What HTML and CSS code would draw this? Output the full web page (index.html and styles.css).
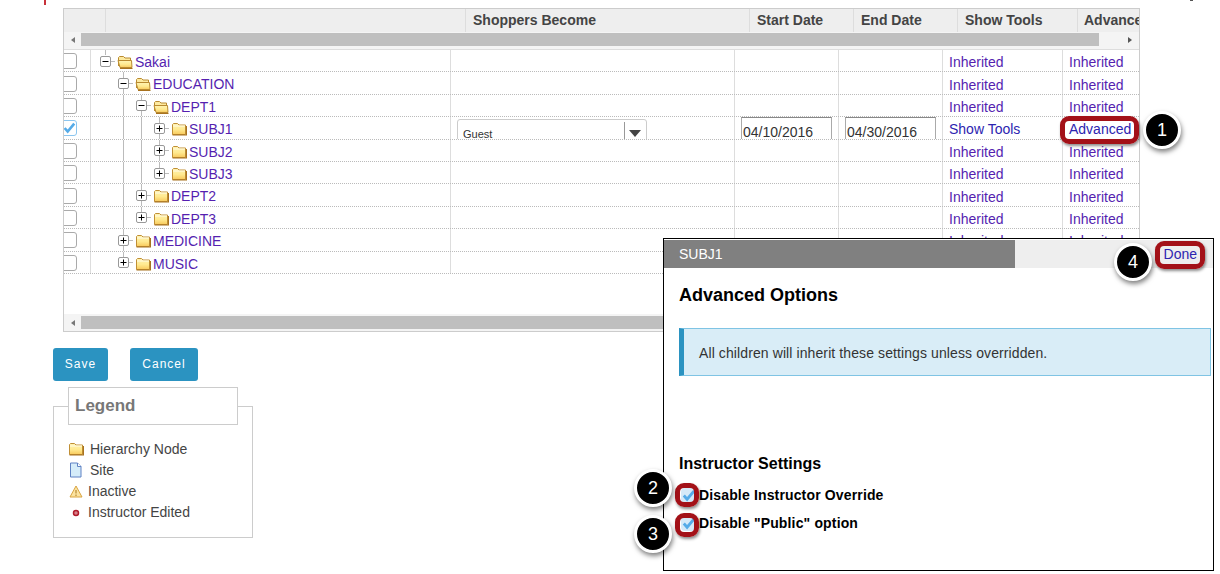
FILE: index.html
```html
<!DOCTYPE html>
<html lang="en">
<head>
    <meta charset="UTF-8">
    <title>Shopping Period Tool</title>
    <link rel="stylesheet" href="styles.css">
</head>
<body>
    <svg class="defs" width="0" height="0">
        <defs>
            <linearGradient id="fill" x1="0" y1="0" x2="0" y2="1">
                <stop offset="0" stop-color="#fff4b4"/>
                <stop offset=".55" stop-color="#ffe98f"/>
                <stop offset="1" stop-color="#f8c95c"/>
            </linearGradient>
        </defs>
        <symbol id="folder" viewBox="0 0 16 14">
            <path d="M1.500 12.500V2.500L2.500 1.500H6.500L8 3H14.500V12.500Z" fill="url(#fill)" stroke="#c08f35"/>
            <path d="M2 4H14" stroke="#fffbe6"/>
            <path d="M1.500 13H15.500V4" fill="none" stroke="#a8721f" stroke-width="1.200"/>
        </symbol>
        <symbol id="folder-open" viewBox="0 0 16 14">
            <path d="M1.500 11V2.500L2.500 1.500H6.500L8 3H13.500V5" fill="#fdeaa0" stroke="#b98a30"/>
            <path d="M3 12.500L1 5.500H14.500L15 12.500Z" fill="url(#fill)" stroke="#b98a30"/>
            <path d="M3 13.500H15.500" fill="none" stroke="#a8721f"/>
        </symbol>
        <symbol id="plus" viewBox="0 0 16 11">
            <path d="M11 5.500H15" stroke="#bbb" fill="none"/>
            <rect x=".5" y=".5" width="10" height="10" rx="1.500" fill="#fff" stroke="#999"/>
            <path d="M2.500 5.500H8.500M5.500 2.500V8.500" stroke="#000" fill="none"/>
        </symbol>
        <symbol id="minus" viewBox="0 0 16 11">
            <path d="M11 5.500H15" stroke="#bbb" fill="none"/>
            <rect x=".5" y=".5" width="10" height="10" rx="1.500" fill="#fff" stroke="#999"/>
            <path d="M2.500 5.500H8.500" stroke="#000" fill="none"/>
        </symbol>
        <symbol id="check" viewBox="0 0 16 16">
            <path d="M3 8L6.500 12L14 3" fill="none" stroke="#55abe8" stroke-width="3"/>
        </symbol>
    </svg>

    <!-- bits of the previous step's callouts, cut off at the top of the picture -->
    <span class="cut cut-red"></span>
    <span class="cut cut-dark"></span>

    <div class="sheet">
        <div class="head">
            <div></div>
            <div></div>
            <div>Shoppers Become</div>
            <div>Start Date</div>
            <div>End Date</div>
            <div>Show Tools</div>
            <div>Advanced</div>
        </div>
        <div class="scroll">
            <span class="arrow left"></span>
            <span class="thumb"></span>
            <span class="arrow right"></span>
        </div>

        <div class="rows">
            <div class="row">
                <div class="cell"><span class="box"></span></div>
                <div class="cell tree">
                    <span class="slot stub"><svg class="exp"><use href="#minus"/></svg></span>
                    <svg class="fold"><use href="#folder-open"/></svg><a>Sakai</a>
                </div>
                <div class="cell"></div><div class="cell"></div><div class="cell"></div>
                <div class="cell"><a>Inherited</a></div>
                <div class="cell"><a>Inherited</a></div>
            </div>
            <div class="row">
                <div class="cell"><span class="box"></span></div>
                <div class="cell tree">
                    <span class="slot"></span>
                    <span class="slot line"><svg class="exp"><use href="#minus"/></svg></span>
                    <svg class="fold"><use href="#folder-open"/></svg><a>EDUCATION</a>
                </div>
                <div class="cell"></div><div class="cell"></div><div class="cell"></div>
                <div class="cell"><a>Inherited</a></div>
                <div class="cell"><a>Inherited</a></div>
            </div>
            <div class="row">
                <div class="cell"><span class="box"></span></div>
                <div class="cell tree">
                    <span class="slot"></span><span class="slot line"></span>
                    <span class="slot line"><svg class="exp"><use href="#minus"/></svg></span>
                    <svg class="fold"><use href="#folder-open"/></svg><a>DEPT1</a>
                </div>
                <div class="cell"></div><div class="cell"></div><div class="cell"></div>
                <div class="cell"><a>Inherited</a></div>
                <div class="cell"><a>Inherited</a></div>
            </div>
            <div class="row">
                <div class="cell"><span class="box checked"><svg><use href="#check"/></svg></span></div>
                <div class="cell tree">
                    <span class="slot"></span><span class="slot line"></span><span class="slot line"></span>
                    <span class="slot line"><svg class="exp"><use href="#plus"/></svg></span>
                    <svg class="fold"><use href="#folder"/></svg><a>SUBJ1</a>
                </div>
                <div class="cell"><div class="pick">Guest<span class="caret"></span></div></div>
                <div class="cell"><div class="date">04/10/2016</div></div>
                <div class="cell"><div class="date">04/30/2016</div></div>
                <div class="cell"><a class="on">Show Tools</a></div>
                <div class="cell"><a class="on">Advanced</a></div>
            </div>
            <div class="row">
                <div class="cell"><span class="box"></span></div>
                <div class="cell tree">
                    <span class="slot"></span><span class="slot line"></span><span class="slot line"></span>
                    <span class="slot line"><svg class="exp"><use href="#plus"/></svg></span>
                    <svg class="fold"><use href="#folder"/></svg><a>SUBJ2</a>
                </div>
                <div class="cell"></div><div class="cell"></div><div class="cell"></div>
                <div class="cell"><a>Inherited</a></div>
                <div class="cell"><a>Inherited</a></div>
            </div>
            <div class="row">
                <div class="cell"><span class="box"></span></div>
                <div class="cell tree">
                    <span class="slot"></span><span class="slot line"></span><span class="slot line"></span>
                    <span class="slot half"><svg class="exp"><use href="#plus"/></svg></span>
                    <svg class="fold"><use href="#folder"/></svg><a>SUBJ3</a>
                </div>
                <div class="cell"></div><div class="cell"></div><div class="cell"></div>
                <div class="cell"><a>Inherited</a></div>
                <div class="cell"><a>Inherited</a></div>
            </div>
            <div class="row">
                <div class="cell"><span class="box"></span></div>
                <div class="cell tree">
                    <span class="slot"></span><span class="slot line"></span>
                    <span class="slot line"><svg class="exp"><use href="#plus"/></svg></span>
                    <svg class="fold"><use href="#folder"/></svg><a>DEPT2</a>
                </div>
                <div class="cell"></div><div class="cell"></div><div class="cell"></div>
                <div class="cell"><a>Inherited</a></div>
                <div class="cell"><a>Inherited</a></div>
            </div>
            <div class="row">
                <div class="cell"><span class="box"></span></div>
                <div class="cell tree">
                    <span class="slot"></span><span class="slot line"></span>
                    <span class="slot half"><svg class="exp"><use href="#plus"/></svg></span>
                    <svg class="fold"><use href="#folder"/></svg><a>DEPT3</a>
                </div>
                <div class="cell"></div><div class="cell"></div><div class="cell"></div>
                <div class="cell"><a>Inherited</a></div>
                <div class="cell"><a>Inherited</a></div>
            </div>
            <div class="row">
                <div class="cell"><span class="box"></span></div>
                <div class="cell tree">
                    <span class="slot"></span>
                    <span class="slot line"><svg class="exp"><use href="#plus"/></svg></span>
                    <svg class="fold"><use href="#folder"/></svg><a>MEDICINE</a>
                </div>
                <div class="cell"></div><div class="cell"></div><div class="cell"></div>
                <div class="cell"><a>Inherited</a></div>
                <div class="cell"><a>Inherited</a></div>
            </div>
            <div class="row">
                <div class="cell"><span class="box"></span></div>
                <div class="cell tree">
                    <span class="slot"></span>
                    <span class="slot half"><svg class="exp"><use href="#plus"/></svg></span>
                    <svg class="fold"><use href="#folder"/></svg><a>MUSIC</a>
                </div>
                <div class="cell"></div><div class="cell"></div><div class="cell"></div>
                <div class="cell"><a>Inherited</a></div>
                <div class="cell"><a>Inherited</a></div>
            </div>
        </div>

        <div class="scroll bottom">
            <span class="arrow left"></span>
            <span class="thumb"></span>
        </div>
    </div>

    <div class="actions">
        <button class="btn save">Save</button>
        <button class="btn cancel">Cancel</button>
    </div>

    <fieldset class="legend">
        <legend>Legend</legend>
        <div class="key"><svg class="key-icon"><use href="#folder"/></svg>Hierarchy Node</div>
        <div class="key">
            <svg class="key-icon" viewBox="0 0 16 16">
                <path d="M2.500 1H9.500L13 4.500V15H2.500Z" fill="#d5ecf9" stroke="#5f82c4"/>
                <path d="M9.500 1V4.500H13" fill="#fff" stroke="#5f82c4"/>
            </svg>Site
        </div>
        <div class="key small">
            <svg class="key-icon" viewBox="0 0 14 14">
                <path d="M7 2L13 13H1Z" fill="#fbe3a0" stroke="#d9a441"/>
                <path d="M7 6V9.500M7 10.500V12" stroke="#a8761c" fill="none"/>
            </svg>Inactive
        </div>
        <div class="key small">
            <svg class="key-icon" viewBox="0 0 14 14">
                <circle cx="7" cy="8" r="2.500" fill="#d9808a" stroke="#b01c2c" stroke-width="1.500"/>
            </svg>Instructor Edited
        </div>
    </fieldset>

    <div class="panel">
        <div class="panel-bar">
            <div class="panel-title">SUBJ1</div>
            <a class="done">Done</a>
        </div>
        <div class="panel-body">
            <h3>Advanced Options</h3>
            <div class="note">All children will inherit these settings unless overridden.</div>
            <h4>Instructor Settings</h4>
            <div class="opt"><span class="tick"><svg><use href="#check"/></svg></span>Disable Instructor Override</div>
            <div class="opt"><span class="tick"><svg><use href="#check"/></svg></span>Disable "Public" option</div>
        </div>
    </div>

    <!-- tutorial callouts drawn on top of the screenshot -->
    <span class="ring ring-adv"></span>
    <span class="ring ring-done"></span>
    <span class="ring ring-opt1"></span>
    <span class="ring ring-opt2"></span>
    <span class="step step-1">1</span>
    <span class="step step-2">2</span>
    <span class="step step-3">3</span>
    <span class="step step-4">4</span>
</body>
</html>
```

FILE: styles.css
```css
html, body {
    height: 574px;
    overflow: hidden;
}
body {
    margin: 0;
    position: relative;
    font-family: "Liberation Sans", Arial, sans-serif;
    font-size: 14px;
    color: #444;
    background: #fff;
}
.defs {
    position: absolute;
}
.cut {
    position: absolute;
    top: 0;
}
.cut-red {
    left: 44px;
    width: 2px;
    height: 5px;
    background: #c8323a;
}
.cut-dark {
    left: 1190px;
    width: 3px;
    height: 1px;
    background: #555;
}

/* table */
.sheet {
    width: 1075px;
    height: 322px;
    margin: 8px 0 0 63px;
    border: 1px solid #ccc;
    display: flex;
    flex-direction: column;
    overflow: hidden;
}
.head {
    display: grid;
    grid-template-columns: 42px 360px 284px 104px 104px 120px 61px;
    height: 23px;
    background: #eee;
    flex: none;
}
.head div {
    border-right: 1px solid #ddd;
    padding-left: 7px;
    font-weight: bold;
    line-height: 23px;
    white-space: nowrap;
    overflow: hidden;
}
.head div:last-child {
    border-right: 0;
    padding-left: 6px;
}
.scroll {
    display: flex;
    align-items: flex-start;
    height: 16px;
    padding-top: 1px;
    background: #f4f4f4;
    flex: none;
    border-bottom: 1px solid #ddd;
}
.scroll.bottom {
    height: 15px;
    padding-top: 2px;
    border-bottom: 0;
}
.thumb {
    flex: 1;
    height: 13px;
    background: #bfbfbf;
}
.arrow {
    width: 17px;
    height: 13px;
    flex: none;
    display: flex;
    align-items: center;
    justify-content: center;
}
.arrow::before {
    content: "";
    border: 3.5px solid transparent;
}
.arrow.left::before {
    border-right: 4px solid #777;
    border-left: 0;
}
.arrow.right {
    width: 40px;
    padding-left: 22px;
    box-sizing: border-box;
}
.arrow.right::before {
    border-left: 4px solid #555;
    border-right: 0;
}
.rows {
    flex: 1;
}
.row {
    display: grid;
    grid-template-columns: 27px 360px 284px 104px 104px 120px 77px;
    grid-auto-rows: 22.4px;
    height: 22.4px;
    box-sizing: border-box;
    border-bottom: 1px dotted #bbb;
    overflow: hidden;
}
.cell {
    border-right: 1px solid #ddd;
    display: flex;
    align-items: center;
    min-width: 0;
    overflow: hidden;
}
.cell:last-child {
    border-right: 0;
}
.cell > a {
    margin-left: 6px;
    position: relative;
    top: 1px;
}
.row a, .done {
    color: #551fb0;
}
.row a.on, .done {
    color: #2c24b0;
}
.box {
    display: block;
    width: 14px;
    height: 14px;
    margin-left: -3px;
    border: 1px solid #aaa;
    border-radius: 3px;
    flex: none;
}
.box.checked {
    border-color: #8cc6ef;
}
.box svg {
    display: block;
    width: 14px;
    height: 14px;
}

/* tree */
.cell.tree {
    padding-left: 5px;
    align-items: stretch;
    white-space: nowrap;
}
.slot {
    width: 18px;
    flex: none;
    display: flex;
    align-items: center;
    background-repeat: no-repeat;
    background-image: none;
}
.slot.line {
    background-image: linear-gradient(#bbb, #bbb);
    background-size: 1px 100%;
    background-position: 9px 0;
}
.slot.half {
    background-image: linear-gradient(#bbb, #bbb);
    background-size: 1px 50%;
    background-position: 9px 0;
}
.slot.stub {
    background-image: linear-gradient(#bbb, #bbb);
    background-size: 1px 5px;
    background-position: 9px 0;
}
.exp {
    width: 16px;
    height: 11px;
    margin-left: 4px;
    flex: none;
}
.fold {
    width: 16px;
    height: 14px;
    margin: 5px 2px 0 3px;
    flex: none;
}
.tree a {
    line-height: 23px;
    margin-left: 0;
    top: 1px;
}

/* row editors, cut off by the row */
.pick {
    width: 190px;
    height: 26px;
    margin: 2px 0 0 6px;
    align-self: flex-start;
    flex: none;
    box-sizing: border-box;
    border: 1px solid #ccc;
    border-radius: 3px;
    padding: 8px 0 0 5px;
    font-size: 11px;
    color: #333;
    position: relative;
}
.caret {
    position: absolute;
    right: 0;
    top: 0;
    width: 21px;
    height: 19px;
    border-left: 1px solid #999;
    margin-top: 2px;
}
.caret::after {
    content: "";
    position: absolute;
    left: 4px;
    top: 8px;
    border: 6px solid transparent;
    border-top: 7px solid #444;
    border-bottom: 0;
}
.date {
    width: 91px;
    height: 28px;
    margin: 0 0 0 6px;
    align-self: flex-start;
    flex: none;
    box-sizing: border-box;
    border: 1px solid #aaa;
    border-top-color: #888;
    padding: 6px 0 0 1px;
    color: #333;
}

/* buttons and legend */
.actions {
    display: flex;
    gap: 22px;
    margin: 16px 0 0 53px;
}
.btn {
    height: 33px;
    border: 0;
    border-radius: 3px;
    padding: 0 0 2px;
    background: #2b93c1;
    color: #fff;
    font-family: inherit;
    font-size: 12px;
    letter-spacing: 1px;
}
.save {
    width: 55px;
}
.cancel {
    width: 68px;
}
.legend {
    width: 200px;
    height: 151px;
    box-sizing: border-box;
    margin: 6px 0 0 53px;
    padding: 13px 0 0 14px;
    border: 1px solid #ccc;
}
.legend legend {
    width: 170px;
    height: 38px;
    box-sizing: border-box;
    margin-left: 0;
    padding: 0 6px;
    border: 1px solid #ccc;
    background: #fff;
    color: #777;
    font-size: 17px;
    font-weight: bold;
    line-height: 35px;
}
.key {
    display: flex;
    align-items: center;
    height: 21px;
}
.key-icon {
    width: 16px;
    height: 14px;
    margin-right: 6px;
    flex: none;
}
.key:nth-of-type(2) .key-icon {
    height: 16px;
}
.key.small .key-icon {
    width: 14px;
    margin: 0 5px 0 1px;
}

/* advanced options window */
.panel {
    position: absolute;
    left: 663px;
    top: 238px;
    width: 549px;
    height: 330px;
    border: 1px solid #000;
    background: #fff;
    padding-top: 1px;
}
.panel-bar {
    height: 28px;
    background: #eee;
    display: flex;
    justify-content: space-between;
}
.panel-title {
    width: 336px;
    padding-left: 15px;
    background: #808080;
    color: #fff;
    line-height: 29px;
}
.done {
    margin-right: 16px;
    line-height: 28px;
}
.panel-body {
    padding: 0 2px 0 15px;
    color: #000;
}
.panel-body h3 {
    margin: 17px 0 0;
    font-size: 18px;
    line-height: 20px;
}
.note {
    margin-top: 23px;
    height: 48px;
    box-sizing: border-box;
    border: 1px solid #7fc4e4;
    border-left: 5px solid #2b93c1;
    background: #d9edf7;
    padding-left: 15px;
    color: #333;
    line-height: 48px;
    letter-spacing: .1px;
}
.panel-body h4 {
    margin: 78px 0 0;
    font-size: 16px;
    line-height: 20px;
}
.opt {
    display: flex;
    align-items: center;
    height: 28px;
    margin-top: 7px;
    font-size: 14px;
    font-weight: bold;
    letter-spacing: .15px;
}
.opt + .opt {
    margin-top: 0;
}
.tick {
    width: 15px;
    height: 15px;
    margin: 0 3px 0 2px;
    background: #d5e9f8;
    border-radius: 4px;
    flex: none;
}
.tick svg {
    display: block;
    width: 15px;
    height: 15px;
}

/* callouts */
.ring {
    position: absolute;
    box-sizing: border-box;
    border: 5px solid #a31118;
    border-radius: 9px;
    box-shadow: 1px 2px 3px rgba(0, 0, 0, .45);
}
.ring-adv {
    left: 1060px;
    top: 116px;
    width: 79px;
    height: 28px;
}
.ring-done {
    left: 1155px;
    top: 241px;
    width: 50px;
    height: 28px;
}
.ring-opt1 {
    left: 675px;
    top: 483px;
    width: 24px;
    height: 24px;
}
.ring-opt2 {
    left: 675px;
    top: 513px;
    width: 24px;
    height: 24px;
}
.step {
    position: absolute;
    width: 38px;
    height: 38px;
    box-sizing: border-box;
    border: 3px solid #fff;
    border-radius: 50%;
    background: #000;
    color: #fff;
    font-size: 18px;
    line-height: 32px;
    text-align: center;
    box-shadow: 1px 3px 5px rgba(0, 0, 0, .5);
}
.step-1 {
    left: 1143px;
    top: 111px;
}
.step-2 {
    left: 634px;
    top: 469px;
}
.step-3 {
    left: 634px;
    top: 515px;
}
.step-4 {
    left: 1114px;
    top: 243px;
}
```
